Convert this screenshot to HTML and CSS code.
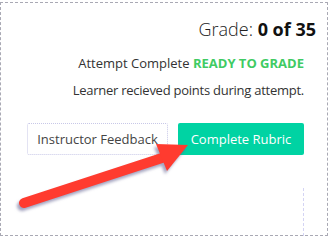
FILE: index.html
```
<!DOCTYPE html>
<html>
<head>
    <meta charset="UTF-8">
    <title>Grade</title>
    <link rel="stylesheet" href="styles.css">
</head>
<body>

<div class="frame">
    <div class="grade">Grade: <b>0 of 35</b></div>
    <div class="status">Attempt Complete <span class="ready">READY TO GRADE</span></div>
    <div class="note">Learner recieved points during attempt.</div>

    <div class="actions">
        <button class="btn btn-outline">Instructor Feedback</button>
        <button class="btn btn-primary">Complete Rubric</button>
    </div>

    <div class="below"></div>

    <svg class="arrow" width="200" height="110" viewBox="0 0 200 110">
        <line x1="24" y1="92" x2="165" y2="46" stroke="#ff3b2f" stroke-width="10" stroke-linecap="round"/>
        <polygon points="156,33 188,34 167,60" fill="#ff3b2f"/>
    </svg>
</div>

</body>
</html>
```

FILE: styles.css
```
*, *::after, *::before {
    box-sizing: border-box;
}

html, body {
    margin: 0;
    padding: 0;
    background: #fff;
    font-family: "Open Sans", sans-serif;
    color: #333;
}

.frame {
    position: relative;
    margin-top: 2px;
    width: 328px;
    height: 234px;
    border: 1px dashed #a9a9b4;
    padding: 13px 11px 0 0;
    text-align: right;
}

.grade {
    font-size: 18px;
    font-weight: 300;
    line-height: 26px;
    color: #222;
}

.grade b {
    font-weight: 700;
    color: #111;
}

.status, .note {
    font-size: 13px;
    line-height: 18px;
    margin-right: 12px;
}

.status {
    margin-top: 12px;
}

.note {
    margin-top: 9px;
    letter-spacing: -0.25px;
}

.ready {
    color: #3fcb63;
    font-weight: 700;
}

.actions {
    display: flex;
    justify-content: flex-end;
    gap: 10px;
    margin: 24px 12px 0 0;
}

.btn {
    height: 32px;
    font-family: inherit;
    font-size: 13px;
    border-radius: 2px;
    padding: 0;
    white-space: nowrap;
    cursor: pointer;
}

.btn-outline {
    width: 141px;
    background: #fff;
    color: #444;
    border: 1px dotted #c8c8e8;
}

.btn-primary {
    width: 126px;
    background: #00d3a3;
    color: #fff;
    border: none;
}

.below {
    height: 48px;
    margin: 33px 12px 0 0;
    border-right: 1px dashed #d4d4f4;
}

.arrow {
    position: absolute;
    left: -1px;
    top: 108px;
    filter: drop-shadow(-2px 3px 1.5px rgba(90, 90, 140, 0.55));
}
```
